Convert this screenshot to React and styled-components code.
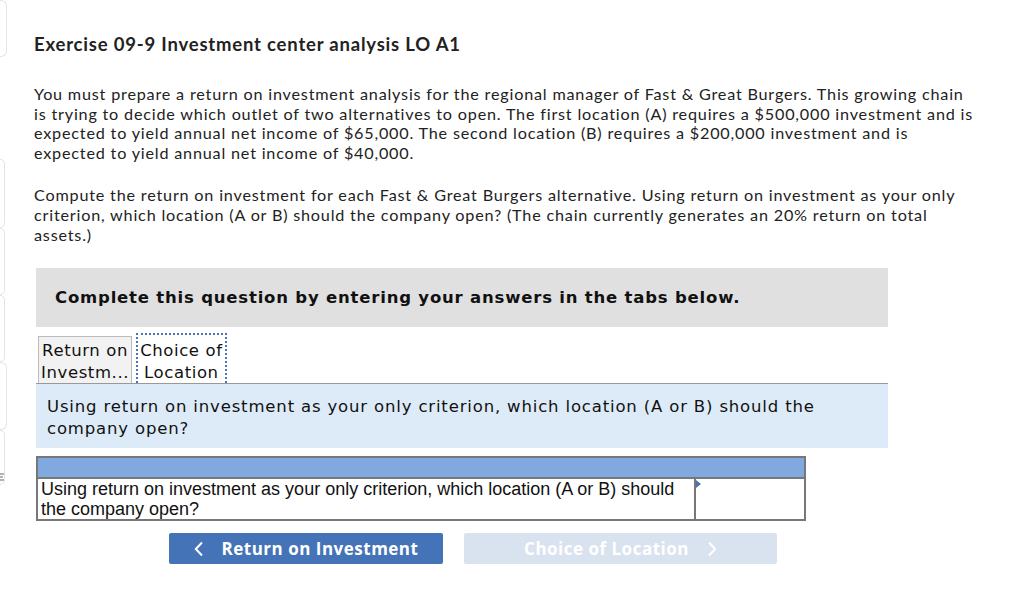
import React from 'react'
import styled, { createGlobalStyle } from 'styled-components'

const GlobalStyle = createGlobalStyle`
    body {
        margin: 0;
        background: #fff;
        font-family: Lato, 'Open Sans', sans-serif;
        color: #222;
    }
`

const sideCards = [
    { top: 0, height: 57, right: 7 },
    { top: 102, height: 69, right: 5 },
    { top: 0, height: 67, right: 5 },
    { top: 0, height: 67, right: 5 },
    { top: 0, height: 68, right: 7 },
    { top: 0, height: 55, right: 5, icon: true },
]

const Page = () => (
    <Layout>
        <GlobalStyle />
        <Sidebar>
            {sideCards.map((card, index) => (
                <SideCard key={index} top={card.top} height={card.height} right={card.right}>
                    {card.icon && (
                        <SideIcon viewBox="0 0 4 8">
                            <path d="M0 1h4M0 4h3M0 7h4" />
                        </SideIcon>
                    )}
                </SideCard>
            ))}
        </Sidebar>

        <Main>
            <Title>Exercise 09-9 Investment center analysis LO A1</Title>

            <Text>
                You must prepare a return on investment analysis for the regional manager of Fast &amp; Great Burgers. This growing chain<br />
                is trying to decide which outlet of two alternatives to open. The first location (A) requires a $500,000 investment and is<br />
                expected to yield annual net income of $65,000. The second location (B) requires a $200,000 investment and is<br />
                expected to yield annual net income of $40,000.
            </Text>

            <Text gap={23}>
                Compute the return on investment for each Fast &amp; Great Burgers alternative. Using return on investment as your only<br />
                criterion, which location (A or B) should the company open? (The chain currently generates an 20% return on total<br />
                assets.)
            </Text>

            <Question>
                <Banner>Complete this question by entering your answers in the tabs below.</Banner>

                <Tabs>
                    <Tab>Return on<br />Investm...</Tab>
                    <Tab active>Choice of<br />Location</Tab>
                </Tabs>

                <Prompt>
                    Using return on investment as your only criterion, which location (A or B) should the<br />
                    company open?
                </Prompt>

                <Table>
                    <tbody>
                        <tr><HeadCell colSpan={2} /></tr>
                        <tr>
                            <Cell>
                                Using return on investment as your only criterion, which location (A or B) should<br />
                                the company open?
                            </Cell>
                            <InputCell><Marker /></InputCell>
                        </tr>
                    </tbody>
                </Table>

                <Nav>
                    <NavButton width={274}>
                        <Chevron viewBox="0 0 10 16"><path d="M8 1.5 1.8 8 8 14.5" /></Chevron>
                        Return on Investment
                    </NavButton>
                    <NavButton width={313} disabled>
                        Choice of Location
                        <Chevron viewBox="0 0 10 16"><path d="M2 1.5 8.2 8 2 14.5" /></Chevron>
                    </NavButton>
                </Nav>
            </Question>
        </Main>
    </Layout>
)

export default Page


const Layout = styled.div`
    display: flex;
    width: 1012px;
    height: 610px;
    overflow: hidden;
`

const Sidebar = styled.div`
    width: 10px;
    flex-shrink: 0;
    display: flex;
    flex-direction: column;
`

const SideCard = styled.div`
    margin-top: ${p => p.top}px;
    height: ${p => p.height}px;
    width: ${p => p.right}px;
    border: 1px solid #e4e4e4;
    border-left: 0;
    border-radius: 0 6px 6px 0;
    box-sizing: border-box;
    position: relative;
    overflow: hidden;
`

const SideIcon = styled.svg`
    position: absolute;
    left: 0;
    bottom: 3px;
    width: 4px;
    height: 8px;
    stroke: #666;
    stroke-width: 1;
    fill: none;
`

const Main = styled.div`
    padding-left: 24px;
    width: 970px;
    flex-shrink: 0;
`

const Title = styled.h1`
    margin: 34px 0 0;
    font-size: 18.5px;
    line-height: 20px;
    font-weight: 700;
    letter-spacing: 0.8px;
    color: #222;
`

const Text = styled.p`
    margin: ${p => p.gap || 30}px 0 0;
    font-size: 16.2px;
    line-height: 19.6px;
    letter-spacing: 0.8px;
    white-space: nowrap;
    color: #222;
`

const Question = styled.div`
    margin: 24px 0 0 2px;
    width: 852px;
    font-family: 'DejaVu Sans', Verdana, sans-serif;
`

const Banner = styled.div`
    height: 59px;
    background: #e0e0e0;
    padding: 0 19px;
    display: flex;
    align-items: center;
    font-size: 16.5px;
    font-weight: 700;
    letter-spacing: 0.8px;
    white-space: nowrap;
    color: #111;
`

const Tabs = styled.div`
    display: flex;
    align-items: flex-end;
    gap: 4px;
    margin-top: 6px;
    padding-left: 2px;
    border-bottom: 1px solid #999;
`

const Tab = styled.div`
    box-sizing: border-box;
    padding: 0 2px;
    height: ${p => p.active ? 50 : 47}px;
    padding-top: ${p => p.active ? 5 : 3}px;
    background: ${p => p.active ? '#fff' : '#f2f2f2'};
    border: ${p => p.active ? '2px dotted #4a73b5' : '1px solid #bbb'};
    border-bottom: 0;
    text-align: center;
    font-size: 16.5px;
    line-height: 22px;
    letter-spacing: 0.6px;
    white-space: nowrap;
    color: #111;
`

const Prompt = styled.div`
    background: #ddebf8;
    padding: 12px 11px 8px;
    font-size: 16.5px;
    line-height: 22px;
    letter-spacing: 0.84px;
    white-space: nowrap;
    color: #111;
`

const Table = styled.table`
    margin-top: 8px;
    width: 770px;
    border-collapse: collapse;
    font-family: 'Liberation Sans', Arial, sans-serif;
`

const HeadCell = styled.td`
    height: 19px;
    padding: 0;
    background: #80aadf;
    border: 2px solid #777;
`

const Cell = styled.td`
    border: 2px solid #777;
    padding: 0 4px 0 3px;
    font-size: 18px;
    line-height: 20px;
    white-space: nowrap;
    color: #111;
    vertical-align: top;
`

const InputCell = styled.td`
    width: 108px;
    border: 2px solid #777;
    position: relative;
    padding: 0;
`

const Marker = styled.span`
    position: absolute;
    left: 0;
    top: 1px;
    border-left: 5px solid #4a73b5;
    border-top: 4px solid transparent;
    border-bottom: 4px solid transparent;
`

const Nav = styled.div`
    display: flex;
    gap: 21px;
    margin: 12px 0 0 133px;
`

const NavButton = styled.button`
    width: ${p => p.width}px;
    height: 31px;
    border: 0;
    border-radius: 2px;
    background: ${p => p.disabled ? '#d9e3ef' : '#4473b7'};
    color: #fff;
    font-family: 'Open Sans', Lato, sans-serif;
    font-size: 17px;
    font-weight: 700;
    letter-spacing: 0.5px;
    display: flex;
    align-items: center;
    justify-content: center;
    gap: 18px;
    padding: 0;
`

const Chevron = styled.svg`
    width: 10px;
    height: 16px;
    fill: none;
    stroke: #fff;
    stroke-width: 2;
`
